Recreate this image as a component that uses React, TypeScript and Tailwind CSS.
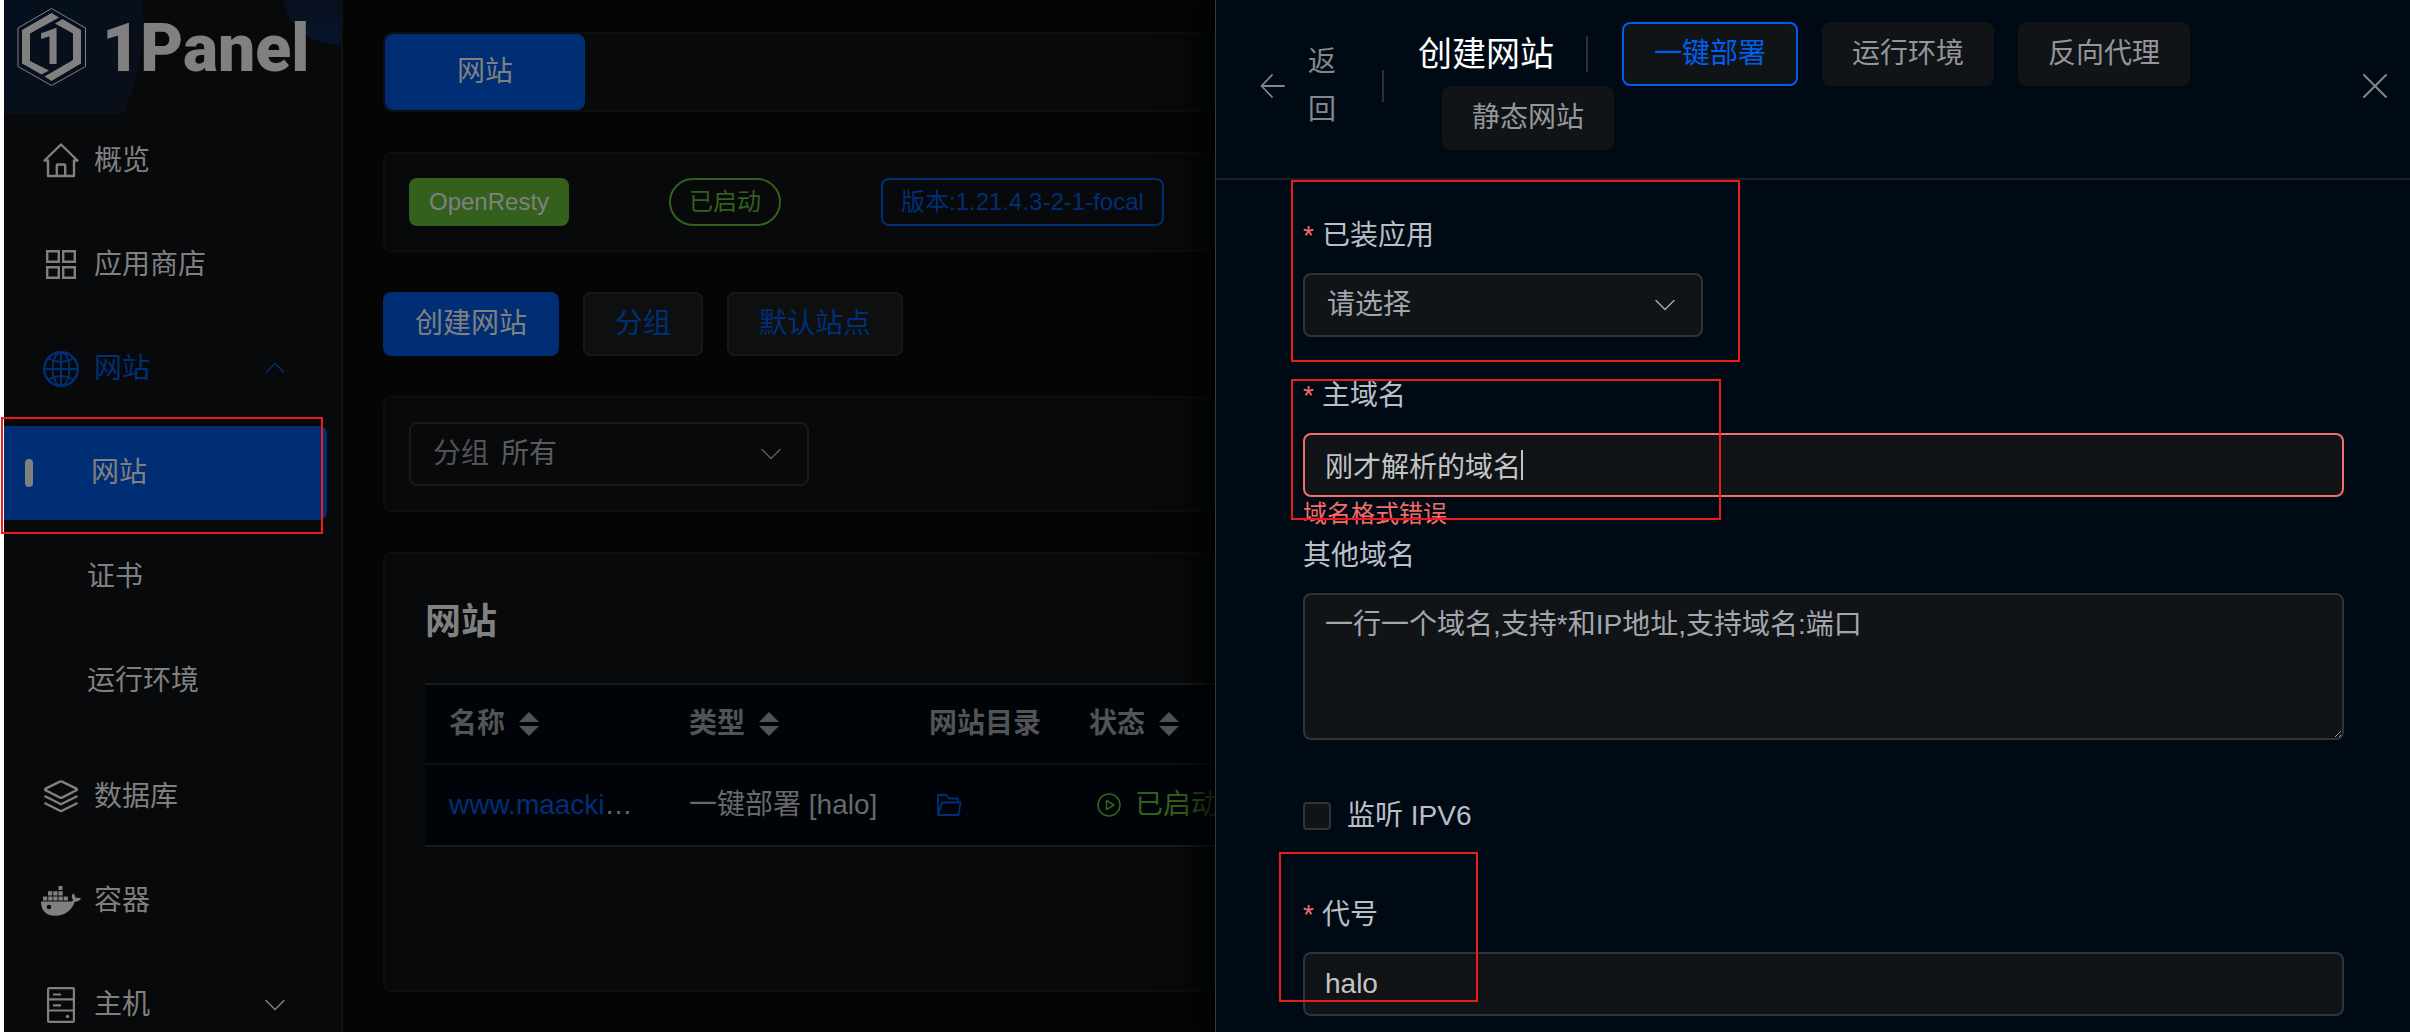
import type { ReactNode } from "react";

const sans = "font-['Liberation_Sans','Noto_Sans_CJK_SC',sans-serif]";

function HouseIcon() {
  return (
    <svg width="36" height="36" viewBox="0 0 36 36" fill="none" stroke="currentColor" strokeWidth="2.4" strokeLinejoin="round" strokeLinecap="round">
      <path d="M5 17.5H1.5L18 1.5l16.5 16H31V33H5z" />
      <path d="M13.8 32.5v-10q0-1 1-1h6.4q1 0 1 1v10" />
    </svg>
  );
}

function GridIcon() {
  return (
    <svg width="36" height="36" viewBox="0 0 36 36" fill="none" stroke="currentColor" strokeWidth="2.4">
      <path d="M4.2 4.2h11.600v10.6H4.2zM20.2 4.2h11.600v10.6H20.2zM4.2 20.2h11.600v10.6H4.2zM20.2 20.2h11.600v10.6H20.2z" />
    </svg>
  );
}

function GlobeIcon() {
  return (
    <svg width="36" height="36" viewBox="0 0 36 36" fill="none" stroke="currentColor" strokeWidth="2">
      <circle cx="18" cy="18" r="16.8" strokeWidth="2.4" />
      <ellipse cx="18" cy="18" rx="8.5" ry="16.8" />
      <path d="M18 1v34M1 18h34M5.5 7.5Q18 14.5 30.5 7.5M5.5 28.5Q18 21.5 30.5 28.5" />
    </svg>
  );
}

function LayersIcon() {
  return (
    <svg width="36" height="36" viewBox="0 0 36 36" fill="none" stroke="currentColor" strokeWidth="2.4" strokeLinejoin="round">
      <path d="M2.6 11.2q-1-.8 0-1.5L17 2.6q1-.5 2 0l14.4 7.1q1 .7 0 1.5L19 18.6q-1 .6-2 0z" />
      <path d="M1.5 17L18 25.3 34.5 17M1.5 24L18 32.3 34.5 24" />
    </svg>
  );
}

function DockerIcon() {
  return (
    <svg width="40" height="36" viewBox="0 0 40 36" fill="currentColor">
      <path d="M17.5 3h4v4h-4zM7 8.2h4.3v4.2H7zM12.2 8.2h4.3v4.2h-4.3zM17.4 8.2h4.3v4.2h-4.3zM2 13.4h4.3v4H2zM7.2 13.4h4.3v4H7.2zM12.3 13.4h4.3v4h-4.3zM17.5 13.4h4.3v4h-4.3zM22.6 13.4h4.3v4h-4.3z" />
      <path
        fillRule="evenodd"
        d="M0 18.6h28.5c2.2 0 3.4-.7 3.6-1.6-1.7-2-1.6-4.5-.3-6.4 1.7 1 2.7 2.6 2.9 4.3 2.2-.4 4.3 0 5.3.9-1.2 2-3.4 3-6.3 3C31 27 24.500 32.8 14 32.8 4.5 32.8 0 27 0 18.6zM8 21.7a2.3 2.3 0 1 0 0 4.6 2.3 2.3 0 0 0 0-4.6z"
      />
    </svg>
  );
}

function ServerIcon() {
  return (
    <svg width="36" height="36" viewBox="0 0 36 36" fill="none" stroke="currentColor" strokeWidth="2.2">
      <rect x="5.1" y="1.1" width="25.8" height="33.8" rx="1" />
      <path d="M5 12.3h26M5 23.5h26M10 7.5h8M10 18.3h8" />
      <circle cx="24.5" cy="29.5" r="1.7" fill="currentColor" stroke="none" />
    </svg>
  );
}

function Chevron({ up = false }: { up?: boolean }) {
  return (
    <svg width="22" height="22" viewBox="0 0 22 22" fill="none" stroke="currentColor" strokeWidth="1.5" strokeLinecap="round" strokeLinejoin="round">
      <path d={up ? "M2.5 14L11 5.5l8.5 8.5" : "M2 6.5l9 9 9-9"} />
    </svg>
  );
}

function Logo() {
  return (
    <div className="relative flex h-[114px] shrink-0 overflow-hidden pl-3 text-[#808080]">
      <svg className="absolute inset-0 size-full" aria-hidden="true">
        <defs>
          <linearGradient id="glow" x1="0" y1="0" x2="1" y2="1">
            <stop offset="0.5" stopColor="#04101f" />
            <stop offset="0.85" stopColor="#0a0f19" />
          </linearGradient>
          <linearGradient id="orb" x1="0" y1="0" x2="0" y2="1">
            <stop offset="0.4" stopColor="#090e18" />
            <stop offset="1" stopColor="#06142b" />
          </linearGradient>
        </defs>
        <circle cx="-64" cy="25" r="203" fill="url(#glow)" />
        <circle cx="331" cy="-8" r="52" fill="url(#orb)" />
      </svg>
      <svg className="relative mt-1.5 shrink-0" width="72" height="82" viewBox="0 0 72 82" fill="currentColor">
        <path d="M35.5 2.5L69.5 22v38.5l-34 19L2 60.500V22z" fill="none" stroke="currentColor" strokeWidth="1" />
        <path d="M35.5 7l7.500 4.5L14 27.5V55l19 9.500-7.5 4L6 57.5V24z" />
        <path d="M46.5 13L65 24v33.5L35.5 75l-7-4.5L57 54V27.5L39 17.500z" />
        <text x="21" y="58" fontSize="50" fontWeight="700" fontFamily="Roboto, sans-serif">1</text>
      </svg>
      <span className="relative ml-3.5 font-['Roboto',sans-serif] text-[66px] leading-[98px] font-black">1Panel</span>
    </div>
  );
}

function NavItem({ icon, label, arrow, active }: { icon: ReactNode; label: string; arrow?: "up" | "down"; active?: boolean }) {
  return (
    <a href="#" className={`flex h-[94px] shrink-0 items-center pr-[55px] ${active ? "text-[#002f76]" : "text-[#808080]"}`}>
      <span className="ml-9 flex w-[42px] justify-center">{icon}</span>
      <span className="ml-3 flex-1">{label}</span>
      {arrow && <Chevron up={arrow === "up"} />}
    </a>
  );
}

function Sidebar() {
  return (
    <aside className="flex w-[343px] shrink-0 flex-col border-r-2 border-l-4 border-r-[#0f1011] border-l-white bg-[#08090b]">
      <Logo />
      <nav className="flex flex-col gap-2.5">
        <NavItem icon={<HouseIcon />} label="概览" />
        <NavItem icon={<GridIcon />} label="应用商店" />
        <NavItem icon={<GlobeIcon />} label="网站" arrow="up" active />
        <div className="mb-3 flex flex-col gap-2.5 text-[#808080]">
          <a href="#" className="mr-[14px] flex h-[94px] items-center rounded-r-lg bg-[#002e74]">
            <span className="ml-[21px] h-7 w-2 rounded-full bg-[#808080]" />
            <span className="ml-[58px]">网站</span>
          </a>
          <a href="#" className="flex h-[94px] items-center pl-[83px]">证书</a>
          <a href="#" className="flex h-[94px] items-center pl-[83px]">运行环境</a>
        </div>
        <NavItem icon={<LayersIcon />} label="数据库" />
        <NavItem icon={<DockerIcon />} label="容器" />
        <NavItem icon={<ServerIcon />} label="主机" arrow="down" />
      </nav>
    </aside>
  );
}

function SortCaret() {
  return (
    <svg className="ml-3.5" width="20" height="24" viewBox="0 0 20 24" fill="currentColor">
      <path d="M10 0l10 10H0zM10 24L0 14h20z" />
    </svg>
  );
}

function SortHead({ label, sortable = true }: { label: string; sortable?: boolean }) {
  return (
    <th className="px-6 text-left font-bold">
      <span className="flex items-center">
        {label}
        {sortable && <SortCaret />}
      </span>
    </th>
  );
}

function MainPage() {
  return (
    <main className="min-w-0 flex-1 overflow-hidden px-10 pt-8">
      <div className="h-20 rounded-lg border-2 border-[#0d0e10] bg-[#07090b]">
        <button className="h-full w-[200px] rounded-lg bg-[#002e74] text-[#808080]">网站</button>
      </div>

      <div className="mt-10 flex h-[100px] items-center gap-[100px] rounded-lg border-2 border-[#0d0e10] bg-[#07090b] px-6 text-2xl">
        <span className="flex h-12 items-center rounded-lg bg-[#33611d] px-5 text-[#808080]">OpenResty</span>
        <span className="flex h-12 items-center rounded-full border-2 border-[#33611d] px-[18px] text-[#33611d]">已启动</span>
        <span className="flex h-12 items-center rounded-lg border-2 border-[#002f76] px-[18px] text-[#002f76]">版本:1.21.4.3-2-1-focal</span>
      </div>

      <div className="mt-10 flex h-16 gap-6 text-[#002f76]">
        <button className="rounded-lg bg-[#002e74] px-8 text-[#808080]">创建网站</button>
        <button className="rounded-lg border-2 border-[#16181a] bg-[#0d0f11] px-[30px]">分组</button>
        <button className="rounded-lg border-2 border-[#16181a] bg-[#0d0f11] px-[30px]">默认站点</button>
      </div>

      <div className="mt-10 flex h-[116px] items-center rounded-lg border-2 border-[#0d0e10] bg-[#07090b] px-6">
        <div className="relative flex h-16 w-[400px] items-center rounded-lg border-2 border-[#17191b] pl-[22px] text-[#5a5b5e]">
          <label htmlFor="group" className="mr-3 text-[#525356]">分组</label>
          <select id="group" className="h-full flex-1 appearance-none bg-transparent">
            <option>所有</option>
          </select>
          <span className="pointer-events-none absolute right-[25px]"><Chevron /></span>
        </div>
      </div>

      <section className="mt-10 h-[440px] rounded-lg border-2 border-[#0d0e10] bg-[#07090b] px-10 pt-10">
        <h2 className="text-4xl leading-[56px] font-bold text-[#808080]">网站</h2>
        <table className="mt-[33px] w-full table-fixed border-y-2 border-[#1a1b1c] bg-[#000408] text-[#67696e]">
          <colgroup>
            <col className="w-[240px]" />
            <col className="w-[240px]" />
            <col className="w-[160px]" />
            <col />
          </colgroup>
          <thead className="text-[#525356]">
            <tr className="h-20 border-b-2 border-[#0c0f13]">
              <SortHead label="名称" />
              <SortHead label="类型" />
              <SortHead label="网站目录" sortable={false} />
              <SortHead label="状态" />
            </tr>
          </thead>
          <tbody>
            <tr className="h-[82px]">
              <td className="truncate px-6">
                <a href="#" className="text-[#002f76]">www.maacki</a>…
              </td>
              <td className="px-6 whitespace-nowrap">一键部署 [halo]</td>
              <td className="px-6">
                <button aria-label="网站目录" className="ml-2 flex text-[#002f76]">
                  <svg width="25" height="24" viewBox="0 0 25 24" fill="none" stroke="currentColor" strokeWidth="1.8" strokeLinejoin="round">
                    <path d="M1 22V2h8l3.5 3.5H21v4M1 22l4-12.500h18.5L21.5 22z" />
                  </svg>
                </button>
              </td>
              <td className="px-6">
                <span className="flex items-center gap-3.5 pl-2 text-[#33611d]">
                  <svg width="24" height="24" viewBox="0 0 24 24" fill="none" stroke="currentColor" strokeWidth="1.6" strokeLinejoin="round">
                    <circle cx="12" cy="12" r="11" />
                    <path d="M9.5 7.5v9l7.5-4.5z" />
                  </svg>
                  已启动
                </span>
              </td>
            </tr>
          </tbody>
        </table>
      </section>
    </main>
  );
}

function FieldLabel({ htmlFor, required = true, children }: { htmlFor: string; required?: boolean; children: ReactNode }) {
  return (
    <label htmlFor={htmlFor} className="mb-3.5 flex h-[46px] items-center text-[#bbbfc5]">
      {required && <span className="mr-2 text-[#f56c6c]">*</span>}
      {children}
    </label>
  );
}

function DrawerHeader() {
  return (
    <header className="flex items-center border-b-2 border-[#1b1f25] pt-[22px] pr-5 pb-7 pl-11">
      <button className="flex w-[76px] shrink-0 items-center gap-[22px] text-[#85878c]">
        <svg className="shrink-0" width="26" height="26" viewBox="0 0 26 26" fill="none" stroke="currentColor" strokeWidth="1.8" strokeLinecap="round" strokeLinejoin="round">
          <path d="M24 13H1.5M12 2L1.5 13 12 24" />
        </svg>
        <span className="leading-[48px]">返回</span>
      </button>
      <span className="mr-[34px] ml-[46px] h-8 w-0.5 shrink-0 bg-[#2c3036]" />
      <div className="flex flex-1 flex-wrap items-center text-[#94969b]">
        <h1 className="text-[34px] leading-[48px] text-white">创建网站</h1>
        <span className="mr-2.5 ml-8 h-9 w-0.5 bg-[#2c3036]" />
        <button className="ml-6 h-16 w-[176px] rounded-lg border-2 border-[#005eeb] bg-[#101417] text-[#005eeb]">一键部署</button>
        <button className="ml-6 h-16 w-[172px] rounded-lg bg-[#101417]">运行环境</button>
        <button className="ml-6 h-16 w-[172px] rounded-lg bg-[#101417]">反向代理</button>
        <button className="ml-6 h-16 w-[172px] rounded-lg bg-[#101417]">静态网站</button>
      </div>
      <button aria-label="关闭" className="text-[#85878c]">
        <svg width="30" height="30" viewBox="0 0 30 30" fill="none" stroke="currentColor" strokeWidth="2" strokeLinecap="round">
          <path d="M4 4l22 22M26 4L4 26" />
        </svg>
      </button>
    </header>
  );
}

function Drawer() {
  return (
    <div className="absolute inset-y-0 right-0 left-[calc(50%+10px)] overflow-hidden border-l border-[#2a3b4a] bg-[#000a14] shadow-[-12px_0_32px_#000]">
      <DrawerHeader />
      <form className="flex flex-col gap-9 pt-[33px] pr-[66px] pl-[87px]">
        <div>
          <FieldLabel htmlFor="app">已装应用</FieldLabel>
          <div className="relative flex h-16 w-[400px] items-center rounded-lg border-2 border-[#303338] bg-[#111417] text-[#a3a6ad]">
            <select id="app" className="size-full appearance-none bg-transparent px-[22px]">
              <option>请选择</option>
            </select>
            <span className="pointer-events-none absolute right-[25px]"><Chevron /></span>
          </div>
        </div>

        <div className="relative">
          <FieldLabel htmlFor="domain">主域名</FieldLabel>
          <div className="relative flex items-center">
            <input id="domain" defaultValue="刚才解析的域名" className="h-16 w-full rounded-lg border-2 border-[#f56c6c] bg-[#111417] px-5 text-[#c2c4c8]" />
            <span className="absolute left-[218px] h-[30px] w-0.5 bg-[#c2c4c8]" />
          </div>
          <p className="absolute top-full text-2xl leading-[34px] text-[#f56c6c]">域名格式错误</p>
        </div>

        <div>
          <FieldLabel htmlFor="others" required={false}>其他域名</FieldLabel>
          <textarea
            id="others"
            placeholder="一行一个域名,支持*和IP地址,支持域名:端口"
            className="block h-[147px] w-full resize rounded-lg border-2 border-[#303338] bg-[#111417] px-5 py-2 leading-[44px] scheme-dark placeholder:text-[#a3a6ad]"
          />
        </div>

        <div className="flex h-20 items-center">
          <input id="ipv6" type="checkbox" className="size-7 appearance-none rounded-sm border-2 border-[#303338] bg-[#111417]" />
          <label htmlFor="ipv6" className="ml-4 text-[#bbbfc5]">监听 IPV6</label>
        </div>

        <div>
          <FieldLabel htmlFor="alias">代号</FieldLabel>
          <input id="alias" defaultValue="halo" className="h-16 w-full rounded-lg border-2 border-[#303338] bg-[#111417] px-5 text-[#c2c4c8]" />
        </div>
      </form>

      <div className="pointer-events-none absolute top-[180px] left-[75px] h-[182px] w-[449px] border-2 border-[#ec1c1c]" />
      <div className="pointer-events-none absolute top-[379px] left-[75px] h-[141px] w-[430px] border-2 border-[#ec1c1c]" />
      <div className="pointer-events-none absolute top-[852px] left-[63px] h-[150px] w-[199px] border-2 border-[#ec1c1c]" />
    </div>
  );
}

export default function App() {
  return (
    <div className={`relative flex h-screen overflow-hidden bg-[#050505] text-[28px] ${sans}`}>
      <Sidebar />
      <MainPage />
      <Drawer />
      <div className="pointer-events-none absolute top-[417px] left-px h-[117px] w-[322px] border-2 border-[#ec1c1c]" />
    </div>
  );
}
